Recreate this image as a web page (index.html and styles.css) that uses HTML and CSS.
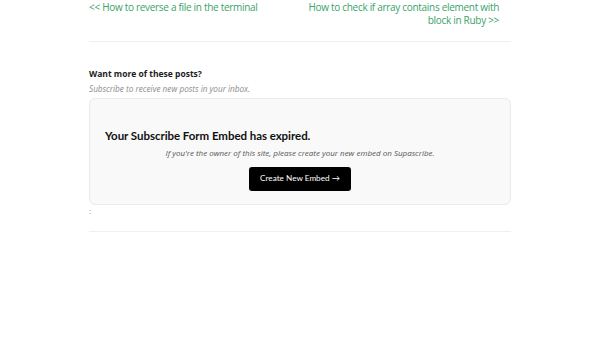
FILE: index.html
```html
<!DOCTYPE html>
<html lang="en">
<head>
    <meta charset="UTF-8">
    <meta name="viewport" content="width=device-width, initial-scale=1.0">
    <title>Post</title>
    <link rel="stylesheet" href="styles.css">
</head>
<body>
    <div class="post-footer">
        <nav class="post-nav">
            <a href="#" class="prev-link">&lt;&lt; How to reverse a file in the terminal</a>
            <a href="#" class="next-link">How to check if array contains element with <span class="nowrap">block in Ruby &gt;&gt;</span></a>
        </nav>
        <hr class="divider">

        <div class="subscribe">
            <h3 class="subscribe-title">Want more of these posts?</h3>
            <p class="subscribe-sub">Subscribe to receive new posts in your inbox.</p>
            <div class="embed-box">
                <h2 class="embed-title">Your Subscribe Form Embed has expired.</h2>
                <p class="embed-note">If you're the owner of this site, please create your new embed on Supascribe.</p>
                <a href="#" class="embed-button">Create New Embed →</a>
            </div>
            <div class="colon">:</div>
        </div>
        <hr class="divider">
    </div>
</body>
</html>
```

FILE: styles.css
```css
* {
    margin: 0;
    padding: 0;
    box-sizing: border-box;
}

body {
    font-family: 'Open Sans', sans-serif;
    background: #ffffff;
    color: #222;
}

.post-footer {
    width: 422px;
    margin: 0 auto;
}

.post-nav {
    display: flex;
    justify-content: space-between;
    align-items: flex-start;
    padding-top: 1px;
    padding-right: 12px;
    font-size: 10px;
    letter-spacing: -0.3px;
    line-height: 13px;
}

.post-nav a {
    color: #3aa26a;
    text-decoration: none;
}

.next-link {
    text-align: right;
    flex: 0 0 218px;
}

.nowrap {
    white-space: nowrap;
}

.divider {
    border: none;
    border-top: 1px solid #f0f0f0;
    margin-top: 14px;
}

.subscribe {
    padding-top: 24px;
}

.subscribe-title {
    font-size: 8.5px;
    font-weight: 700;
    color: #1c1c1c;
    line-height: 16px;
}

.subscribe-sub {
    font-size: 8.2px;
    font-style: italic;
    color: #8c8c8c;
    line-height: 13px;
    margin-bottom: 3px;
}

.embed-box {
    background: #f9f9f9;
    border: 1px solid #ebebeb;
    border-radius: 6px;
    padding: 29px 15px 13px;
    text-align: center;
}

.embed-title {
    font-family: 'Lato', sans-serif;
    font-size: 11.5px;
    font-weight: 700;
    letter-spacing: -0.05px;
    color: #111;
    text-align: left;
    line-height: 16px;
}

.embed-note {
    font-size: 8px;
    font-style: italic;
    color: #555;
    margin-top: 3px;
    line-height: 12px;
}

.embed-button {
    display: inline-block;
    margin-top: 8px;
    padding: 5px 11px 6px;
    background: #000;
    color: #fff;
    text-decoration: none;
    border-radius: 3px;
    font-family: 'Lato', sans-serif;
    font-size: 8.2px;
    line-height: 13px;
}

.colon {
    font-size: 8px;
    color: #999;
    line-height: 10px;
    padding-top: 1px;
    margin-bottom: 15px;
}
```
